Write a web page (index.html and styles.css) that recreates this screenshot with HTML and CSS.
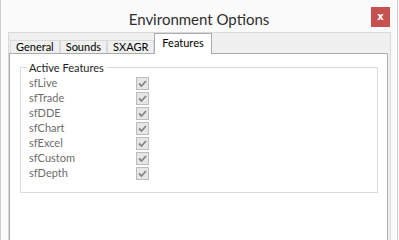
FILE: index.html
```html
<!DOCTYPE html>
<html lang="en">
<head>
  <meta charset="UTF-8" />
  <title>Environment Options</title>
  <link rel="stylesheet" href="styles.css">
</head>
<body>
  <div class="window">
    <div class="titlebar">
      <span class="title">Environment Options</span>
      <button class="close">x</button>
    </div>
    <div class="frame">
      <div class="tabs">
        <div class="tab">General</div>
        <div class="tab">Sounds</div>
        <div class="tab">SXAGR</div>
        <div class="tab active">Features</div>
      </div>
      <div class="page">
        <fieldset class="group">
          <legend>Active Features</legend>
          <div class="row"><span>sfLive</span><svg class="check" viewBox="0 0 13 13"><rect x="0.5" y="0.5" width="12" height="12"/><path d="M3 6.5l2.5 2.5l4.5-5"/></svg></div>
          <div class="row"><span>sfTrade</span><svg class="check" viewBox="0 0 13 13"><rect x="0.5" y="0.5" width="12" height="12"/><path d="M3 6.5l2.5 2.5l4.5-5"/></svg></div>
          <div class="row"><span>sfDDE</span><svg class="check" viewBox="0 0 13 13"><rect x="0.5" y="0.5" width="12" height="12"/><path d="M3 6.5l2.5 2.5l4.5-5"/></svg></div>
          <div class="row"><span>sfChart</span><svg class="check" viewBox="0 0 13 13"><rect x="0.5" y="0.5" width="12" height="12"/><path d="M3 6.5l2.5 2.5l4.5-5"/></svg></div>
          <div class="row"><span>sfExcel</span><svg class="check" viewBox="0 0 13 13"><rect x="0.5" y="0.5" width="12" height="12"/><path d="M3 6.5l2.5 2.5l4.5-5"/></svg></div>
          <div class="row"><span>sfCustom</span><svg class="check" viewBox="0 0 13 13"><rect x="0.5" y="0.5" width="12" height="12"/><path d="M3 6.5l2.5 2.5l4.5-5"/></svg></div>
          <div class="row"><span>sfDepth</span><svg class="check" viewBox="0 0 13 13"><rect x="0.5" y="0.5" width="12" height="12"/><path d="M3 6.5l2.5 2.5l4.5-5"/></svg></div>
        </fieldset>
      </div>
    </div>
  </div>
</body>
</html>
```
FILE: styles.css
```css
* {
  box-sizing: border-box;
}
body {
  margin: 0;
  height: 240px;
  overflow: hidden;
  font-family: 'Lato', 'Open Sans', sans-serif;
  font-size: 11px;
  background: #fbfbfb;
}
.window {
  width: 398px;
  height: 240px;
  border-left: 1px solid #cfcfcf;
  border-right: 1px solid #cfcfcf;
  background: #fbfbfb;
  display: flex;
  flex-direction: column;
}
.titlebar {
  height: 32px;
  display: flex;
  align-items: flex-start;
  justify-content: center;
  position: relative;
}
.title {
  font-size: 15px;
  line-height: 18px;
  margin-top: 10px;
  color: #2e2e2e;
}
.close {
  position: absolute;
  top: 7px;
  right: 7px;
  width: 19px;
  height: 20px;
  border: none;
  padding: 0;
  background: #c75050;
  color: #fff;
  font-family: 'DejaVu Sans', sans-serif;
  font-weight: bold;
  font-size: 10px;
  line-height: 18px;
}
.frame {
  flex: 1;
  margin: 0 6px 0 7px;
  background: #f0f0f0;
  border: 1px solid #d9d9d9;
  border-bottom: none;
  padding-right: 2px;
  display: flex;
  flex-direction: column;
}
.tabs {
  display: flex;
  align-items: flex-end;
  height: 20px;
  padding-left: 1px;
}
.tab {
  height: 13px;
  padding: 0 5px;
  border: 1px solid #d9d9d9;
  border-bottom: none;
  line-height: 12px;
  color: #000;
}
.tab.active {
  height: 21px;
  margin-bottom: -1px;
  padding: 0 7px;
  background: #fff;
  border-color: #acacac;
  line-height: 18px;
  position: relative;
}
.page {
  flex: 1;
  background: #fff;
  border: 1px solid #acacac;
  border-bottom: none;
}
.group {
  margin: 6px 9px 0 10px;
  padding: 0 0 12px 8px;
  border: 1px solid #dcdcdc;
  min-inline-size: 0;
}
.group legend {
  margin-left: -2px;
  padding: 0 2px;
  line-height: 15px;
  color: #1e1e1e;
}
.row {
  display: grid;
  grid-template-columns: 107px 13px;
  align-items: center;
  height: 15px;
  color: #6d6d6d;
}
.check {
  width: 13px;
  height: 13px;
  margin-top: 1px;
}
.check rect {
  fill: #e6e6e6;
  stroke: #bcbcbc;
}
.check path {
  fill: none;
  stroke: #858585;
  stroke-width: 1.8;
}
```
